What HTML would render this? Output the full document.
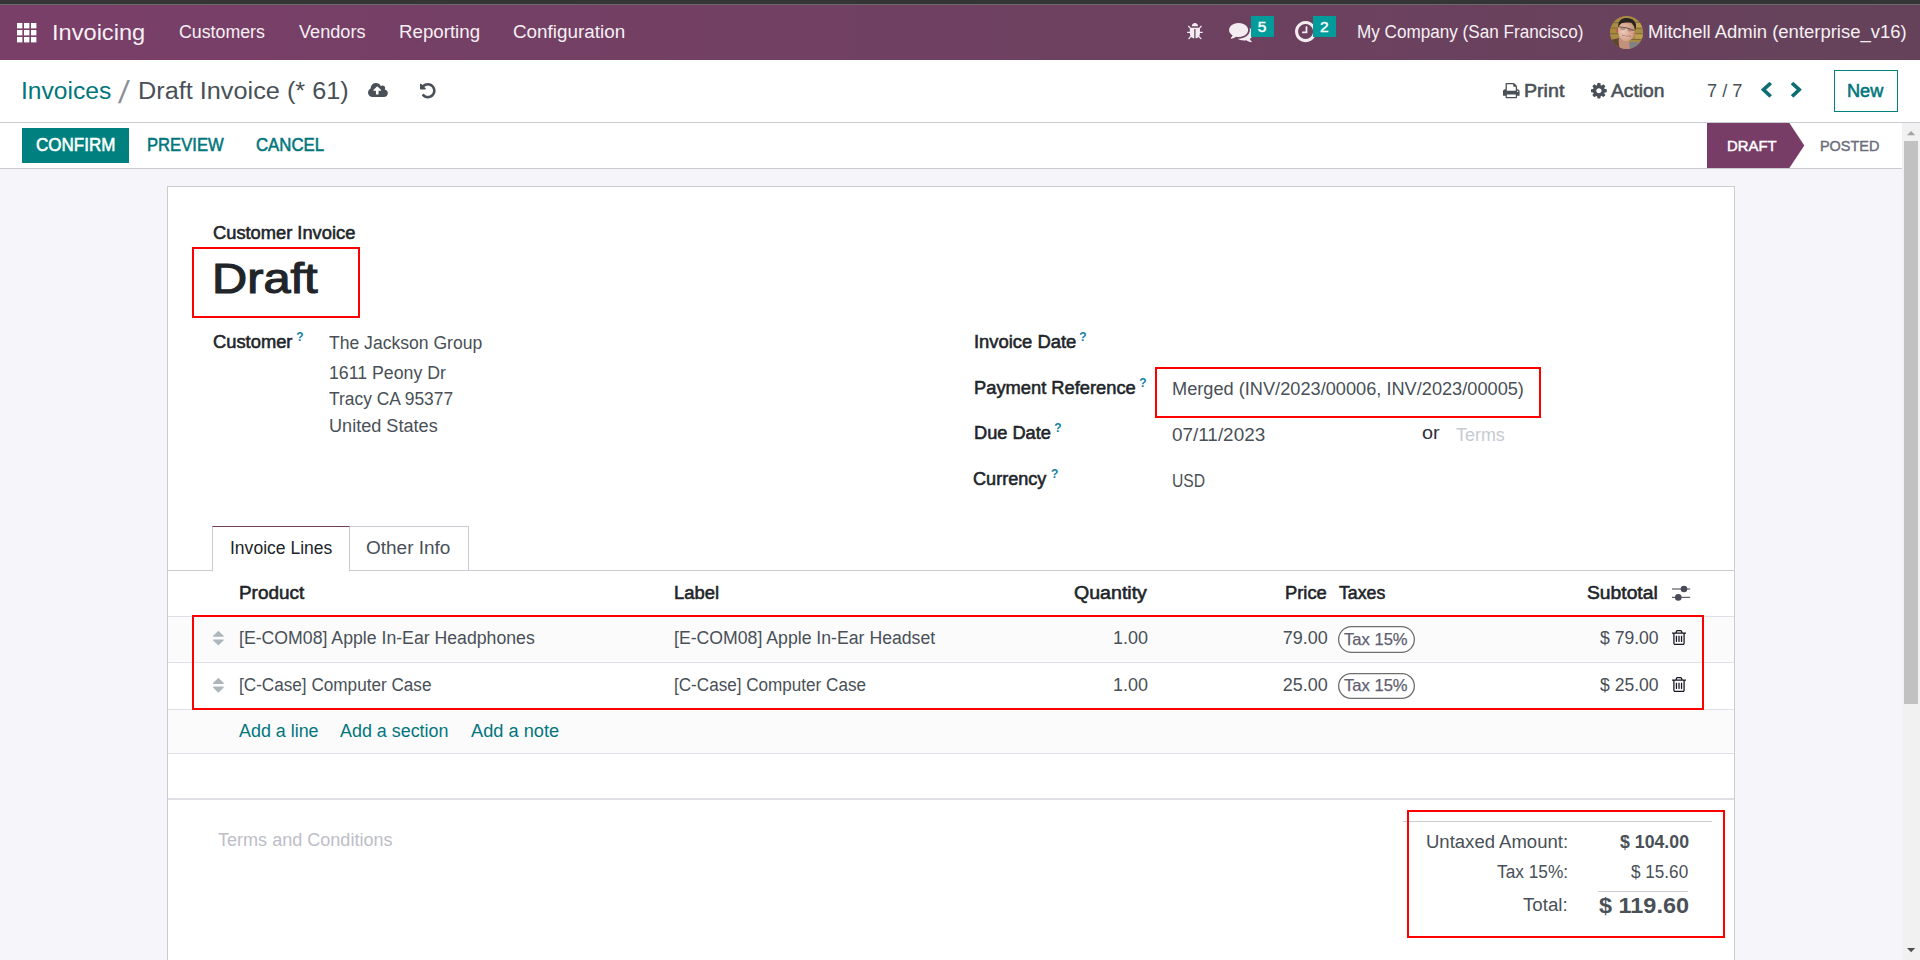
<!DOCTYPE html>
<html lang="en"><head><meta charset="utf-8"><title>Odoo - Draft Invoice</title>
<style>
html,body{margin:0;padding:0}
body{width:1920px;height:960px;overflow:hidden;position:relative;background:#fff;font-family:"Liberation Sans", sans-serif}
.bx{position:absolute;box-sizing:content-box}
.ic{position:absolute;display:block;overflow:visible}
.t{position:absolute;white-space:pre;line-height:1;font-family:"Liberation Sans", sans-serif;transform-origin:0 0}
</style></head>
<body>
<header id="navbar">
<div class="bx" style="left:0px;top:0px;width:1920.00px;height:4.00px;background:#353535"></div>
<div class="bx" style="left:0px;top:4px;width:1920.00px;height:1.00px;background:#696969"></div>
<div class="bx" style="left:0px;top:5px;width:1920.00px;height:55.00px;background:linear-gradient(90deg,#7A3F69 0%,#65425A 100%)"></div>
<svg class="ic" style="left:16.9px;top:23px;width:19.4px;height:19.4px" viewBox="0 0 19.4 19.4"><rect x="0" y="0" width="5.4" height="5.4" fill="#fff"/><rect x="7" y="0" width="5.4" height="5.4" fill="#fff"/><rect x="14" y="0" width="5.4" height="5.4" fill="#fff"/><rect x="0" y="7" width="5.4" height="5.4" fill="#fff"/><rect x="7" y="7" width="5.4" height="5.4" fill="#fff"/><rect x="14" y="7" width="5.4" height="5.4" fill="#fff"/><rect x="0" y="14" width="5.4" height="5.4" fill="#fff"/><rect x="7" y="14" width="5.4" height="5.4" fill="#fff"/><rect x="14" y="14" width="5.4" height="5.4" fill="#fff"/></svg>
<svg class="ic" style="left:1187.1px;top:22.9px;width:15.80px;height:16.30px" viewBox="32 -1472 1600 1568" preserveAspectRatio="none"><path fill="#F3ECF0" transform="scale(1,-1)" d="M1632 576q0 -26 -19 -45t-45 -19h-224q0 -171 -67 -290l208 -209q19 -19 19 -45t-19 -45q-18 -19 -45 -19t-45 19l-198 197q-5 -5 -15 -13t-42 -28.5t-65 -36.5t-82 -29t-97 -13v896h-128v-896q-51 0 -101.5 13.5t-87 33t-66 39t-43.5 32.5l-15 14l-183 -207
q-20 -21 -48 -21q-24 0 -43 16q-19 18 -20.5 44.5t15.5 46.5l202 227q-58 114 -58 274h-224q-26 0 -45 19t-19 45t19 45t45 19h224v294l-173 173q-19 19 -19 45t19 45t45 19t45 -19l173 -173h844l173 173q19 19 45 19t45 -19t19 -45t-19 -45l-173 -173v-294h224q26 0 45 -19
t19 -45zM1152 1152h-640q0 133 93.5 226.5t226.5 93.5t226.5 -93.5t93.5 -226.5z"/></svg>
<svg class="ic" style="left:1229.2px;top:22.9px;width:24.40px;height:19.20px" viewBox="0 -1279.9999694824219 1792 1408.111083984375" preserveAspectRatio="none"><path fill="#F3ECF0" transform="scale(1,-1)" d="M1408 768q0 -139 -94 -257t-256.5 -186.5t-353.5 -68.5q-86 0 -176 16q-124 -88 -278 -128q-36 -9 -86 -16h-3q-11 0 -20.5 8t-11.5 21q-1 3 -1 6.5t0.5 6.5t2 6l2.5 5t3.5 5.5t4 5t4.5 5t4 4.5q5 6 23 25t26 29.5t22.5 29t25 38.5t20.5 44q-124 72 -195 177t-71 224
q0 139 94 257t256.5 186.5t353.5 68.5t353.5 -68.5t256.5 -186.5t94 -257zM1792 512q0 -120 -71 -224.5t-195 -176.5q10 -24 20.5 -44t25 -38.5t22.5 -29t26 -29.5t23 -25q1 -1 4 -4.5t4.5 -5t4 -5t3.5 -5.5l2.5 -5t2 -6t0.5 -6.5t-1 -6.5q-3 -14 -13 -22t-22 -7
q-50 7 -86 16q-154 40 -278 128q-90 -16 -176 -16q-271 0 -472 132q58 -4 88 -4q161 0 309 45t264 129q125 92 192 212t67 254q0 77 -23 152q129 -71 204 -178t75 -230z"/></svg>
<div class="bx" style="left:1250.75px;top:16px;width:23.25px;height:20.75px;background:#029B9B"></div>
<svg class="ic" style="left:1294.6px;top:21.3px;width:21.20px;height:21.20px" viewBox="0 -1408 1536 1536" preserveAspectRatio="none"><path fill="#F3ECF0" transform="scale(1,-1)" d="M896 992v-448q0 -14 -9 -23t-23 -9h-320q-14 0 -23 9t-9 23v64q0 14 9 23t23 9h224v352q0 14 9 23t23 9h64q14 0 23 -9t9 -23zM1312 640q0 148 -73 273t-198 198t-273 73t-273 -73t-198 -198t-73 -273t73 -273t198 -198t273 -73t273 73t198 198t73 273zM1536 640
q0 -209 -103 -385.5t-279.5 -279.5t-385.5 -103t-385.5 103t-279.5 279.5t-103 385.5t103 385.5t279.5 279.5t385.5 103t385.5 -103t279.5 -279.5t103 -385.5z"/></svg>
<div class="bx" style="left:1313px;top:16px;width:22.75px;height:20.75px;background:#029B9B"></div>
<svg class="ic" style="left:1609.9px;top:16px;width:33.1px;height:33.1px" viewBox="0 0 33 33">
<defs><clipPath id="av"><circle cx="16.5" cy="16.5" r="16.5"/></clipPath>
<radialGradient id="avf" cx="0.32" cy="0.5" r="0.6"><stop offset="0" stop-color="#ECCBBB"/><stop offset="0.55" stop-color="#DDAE98"/><stop offset="1" stop-color="#CF9C85"/></radialGradient></defs>
<g clip-path="url(#av)"><g>
<rect x="-2" y="-2" width="37" height="37" fill="#A88C45"/>
<rect x="-2" y="6.2" width="37" height="1" fill="#7C6636"/>
<rect x="-2" y="11.6" width="37" height="1" fill="#7C6636"/>
<rect x="-2" y="17.2" width="37" height="1" fill="#7C6636"/>
<rect x="-2" y="22.8" width="37" height="1" fill="#7C6636"/>
<rect x="-2" y="28" width="37" height="1" fill="#7C6636"/>
<rect x="24" y="7" width="12" height="4.4" fill="#BC9F52"/>
<rect x="25" y="18.4" width="10" height="4.2" fill="#BA9D50"/>
<rect x="0" y="12.8" width="6" height="4.2" fill="#A9883A"/>
<path d="M2 24 L9 22 L13 33 L0 33Z" fill="#5B4632"/>
<path d="M17 27 L27 25.5 L31 34 L14 34Z" fill="#7E8187"/>
<path d="M9 20 L18 21 L20 33 L10 33 Q8 27 9 20Z" fill="#C4907A"/>
<ellipse cx="16.2" cy="15" rx="8.3" ry="10.2" transform="rotate(-7 16.2 15)" fill="url(#avf)"/>
<path d="M8.2 11.5 Q7.5 3.2 15 2 Q23.5 1 25.8 8 Q26.5 11 25.2 14.2 Q24.2 9.2 21.5 6.8 Q16 5.8 11.5 7.2 Q9 8.8 8.2 11.5Z" fill="#2A2220"/>
<path d="M8.6 10.8 L16 11.8 L24.6 14.4" stroke="#4A3C38" stroke-width="1" fill="none" opacity="0.8"/><ellipse cx="12.6" cy="12.6" rx="2.6" ry="1.5" fill="#8A6A5E" opacity="0.55"/><ellipse cx="20" cy="14" rx="2.6" ry="1.5" fill="#8A6A5E" opacity="0.55"/>
<ellipse cx="7.3" cy="14.6" rx="0.9" ry="2" fill="#B8574A"/>
<ellipse cx="24.6" cy="17.6" rx="0.9" ry="1.8" fill="#C47A62"/>
<path d="M12.2 19.2 Q16 22.6 20.6 20.4 Q16.4 20.6 12.2 19.2Z" fill="#F4ECE8"/>
<path d="M12 19 Q16.2 21 20.8 20.2" stroke="#8E4A42" stroke-width="0.6" fill="none"/>
</g></g></svg>
<span class="t" id="t0" style="left:51.69px;top:22.00px;color:#F6F0F4;font-size:22.3px;font-weight:400;transform:scaleX(1.0589);">Invoicing</span>
<span class="t" id="t1" style="left:179.10px;top:23.00px;color:#F6F0F4;font-size:18px;font-weight:400;transform:scaleX(0.9871);">Customers</span>
<span class="t" id="t2" style="left:298.87px;top:23.00px;color:#F6F0F4;font-size:18px;font-weight:400;transform:scaleX(1.0080);">Vendors</span>
<span class="t" id="t3" style="left:398.64px;top:23.00px;color:#F6F0F4;font-size:18px;font-weight:400;transform:scaleX(1.0382);">Reporting</span>
<span class="t" id="t4" style="left:512.84px;top:23.00px;color:#F6F0F4;font-size:18px;font-weight:400;transform:scaleX(1.0475);">Configuration</span>
<span class="t" id="t5" style="left:1257.86px;top:19.40px;color:#ffffff;font-size:15.5px;font-weight:400;-webkit-text-stroke:0.47px currentColor;">5</span>
<span class="t" id="t6" style="left:1319.97px;top:19.40px;color:#ffffff;font-size:15.5px;font-weight:400;-webkit-text-stroke:0.47px currentColor;">2</span>
<span class="t" id="t7" style="left:1357.17px;top:23.00px;color:#F6F0F4;font-size:18px;font-weight:400;transform:scaleX(0.9510);">My Company (San Francisco)</span>
<span class="t" id="t8" style="left:1648.20px;top:23.00px;color:#F6F0F4;font-size:18px;font-weight:400;transform:scaleX(1.0261);">Mitchell Admin (enterprise_v16)</span>
</header>
<section id="control-panel">
<div class="bx" style="left:0px;top:60px;width:1920.00px;height:62.00px;background:#fff"></div>
<div class="bx" style="left:0px;top:122px;width:1920.00px;height:1.00px;background:#C9CCD3"></div>
<svg class="ic" style="left:368px;top:82.8px;width:19.80px;height:14.00px" viewBox="0 -1408 1920 1408" preserveAspectRatio="none"><path fill="#495057" transform="scale(1,-1)" d="M1280 672q0 14 -9 23l-352 352q-9 9 -23 9t-23 -9l-351 -351q-10 -12 -10 -24q0 -14 9 -23t23 -9h224v-352q0 -13 9.5 -22.5t22.5 -9.5h192q13 0 22.5 9.5t9.5 22.5v352h224q13 0 22.5 9.5t9.5 22.5zM1920 384q0 -159 -112.5 -271.5t-271.5 -112.5h-1088
q-185 0 -316.5 131.5t-131.5 316.5q0 130 70 240t188 165q-2 30 -2 43q0 212 150 362t362 150q156 0 285.5 -87t188.5 -231q71 62 166 62q106 0 181 -75t75 -181q0 -76 -41 -138q130 -31 213.5 -135.5t83.5 -238.5z"/></svg>
<svg class="ic" style="left:420.1px;top:83px;width:15.60px;height:15.40px" viewBox="0 -1408 1536 1536" preserveAspectRatio="none"><path fill="#495057" transform="scale(1,-1)" d="M1536 640q0 -156 -61 -298t-164 -245t-245 -164t-298 -61q-172 0 -327 72.5t-264 204.5q-7 10 -6.5 22.5t8.5 20.5l137 138q10 9 25 9q16 -2 23 -12q73 -95 179 -147t225 -52q104 0 198.5 40.5t163.5 109.5t109.5 163.5t40.5 198.5t-40.5 198.5t-109.5 163.5
t-163.5 109.5t-198.5 40.5q-98 0 -188 -35.5t-160 -101.5l137 -138q31 -30 14 -69q-17 -40 -59 -40h-448q-26 0 -45 19t-19 45v448q0 42 40 59q39 17 69 -14l130 -129q107 101 244.5 156.5t284.5 55.5q156 0 298 -61t245 -164t164 -245t61 -298z"/></svg>
<svg class="ic" style="left:1503.1px;top:82.8px;width:16.60px;height:15.30px" viewBox="0 -1408 1664 1536" preserveAspectRatio="none"><path fill="#495057" transform="scale(1,-1)" d="M384 0h896v256h-896v-256zM384 640h896v384h-160q-40 0 -68 28t-28 68v160h-640v-640zM1536 576q0 26 -19 45t-45 19t-45 -19t-19 -45t19 -45t45 -19t45 19t19 45zM1664 576v-416q0 -13 -9.5 -22.5t-22.5 -9.5h-224v-160q0 -40 -28 -68t-68 -28h-960q-40 0 -68 28t-28 68
v160h-224q-13 0 -22.5 9.5t-9.5 22.5v416q0 79 56.5 135.5t135.5 56.5h64v544q0 40 28 68t68 28h672q40 0 88 -20t76 -48l152 -152q28 -28 48 -76t20 -88v-256h64q79 0 135.5 -56.5t56.5 -135.5z"/></svg>
<svg class="ic" style="left:1590.9px;top:82.8px;width:15.80px;height:15.40px" viewBox="0 -1408 1536 1536" preserveAspectRatio="none"><path fill="#495057" transform="scale(1,-1)" d="M1024 640q0 106 -75 181t-181 75t-181 -75t-75 -181t75 -181t181 -75t181 75t75 181zM1536 749v-222q0 -12 -8 -23t-20 -13l-185 -28q-19 -54 -39 -91q35 -50 107 -138q10 -12 10 -25t-9 -23q-27 -37 -99 -108t-94 -71q-12 0 -26 9l-138 108q-44 -23 -91 -38
q-16 -136 -29 -186q-7 -28 -36 -28h-222q-14 0 -24.5 8.5t-11.5 21.5l-28 184q-49 16 -90 37l-141 -107q-10 -9 -25 -9q-14 0 -25 11q-126 114 -165 168q-7 10 -7 23q0 12 8 23q15 21 51 66.5t54 70.5q-27 50 -41 99l-183 27q-13 2 -21 12.5t-8 23.5v222q0 12 8 23t19 13
l186 28q14 46 39 92q-40 57 -107 138q-10 12 -10 24q0 10 9 23q26 36 98.5 107.5t94.5 71.5q13 0 26 -10l138 -107q44 23 91 38q16 136 29 186q7 28 36 28h222q14 0 24.5 -8.5t11.5 -21.5l28 -184q49 -16 90 -37l142 107q9 9 24 9q13 0 25 -10q129 -119 165 -170q7 -8 7 -22
q0 -12 -8 -23q-15 -21 -51 -66.5t-54 -70.5q26 -50 41 -98l183 -28q13 -2 21 -12.5t8 -23.5z"/></svg>
<svg class="ic" style="left:1761.3px;top:82.2px;width:10.80px;height:15.40px" viewBox="154 -1510 1036 1612" preserveAspectRatio="none"><path fill="#0B6E73" transform="scale(1,-1)" d="M1171 1235l-531 -531l531 -531q19 -19 19 -45t-19 -45l-166 -166q-19 -19 -45 -19t-45 19l-742 742q-19 19 -19 45t19 45l742 742q19 19 45 19t45 -19l166 -166q19 -19 19 -45t-19 -45z"/></svg>
<svg class="ic" style="left:1791px;top:82.2px;width:10.70px;height:15.40px" viewBox="90 -1510 1036 1612" preserveAspectRatio="none"><path fill="#0B6E73" transform="scale(1,-1)" d="M1107 659l-742 -742q-19 -19 -45 -19t-45 19l-166 166q-19 19 -19 45t19 45l531 531l-531 531q-19 19 -19 45t19 45l166 166q19 19 45 19t45 -19l742 -742q19 -19 19 -45t-19 -45z"/></svg>
<div class="bx" style="left:1834px;top:70px;width:62px;height:40px;border:1px solid #008180"></div>
<span class="t" id="t9" style="left:21.46px;top:79.00px;color:#01767C;font-size:24.7px;font-weight:400;transform:scaleX(0.9969);">Invoices</span>
<span class="t" id="t10" style="left:119.30px;top:77.40px;color:#8D8E98;font-size:31.7px;font-weight:400;transform:skewX(-7.5deg);transform-origin:50% 60%;">/</span>
<span class="t" id="t11" style="left:137.74px;top:79.00px;color:#495057;font-size:24.7px;font-weight:400;transform:scaleX(1.0238);">Draft Invoice (* 61)</span>
<span class="t" id="t12" style="left:1524.04px;top:82.00px;color:#495057;font-size:18px;font-weight:400;-webkit-text-stroke:0.55px currentColor;transform:scaleX(1.0902);">Print</span>
<span class="t" id="t13" style="left:1611.37px;top:82.00px;color:#495057;font-size:18px;font-weight:400;-webkit-text-stroke:0.55px currentColor;transform:scaleX(1.0675);">Action</span>
<span class="t" id="t14" style="left:1706.90px;top:82.00px;color:#495057;font-size:18px;font-weight:400;transform:scaleX(1.0103);">7 / 7</span>
<span class="t" id="t15" style="left:1847.34px;top:82.00px;color:#01767C;font-size:18px;font-weight:400;-webkit-text-stroke:0.55px currentColor;transform:scaleX(1.0082);">New</span>
</section>
<section id="statusbar">
<div class="bx" style="left:0px;top:123px;width:1902.00px;height:45.00px;background:#fff"></div>
<div class="bx" style="left:0px;top:168px;width:1902.00px;height:1.00px;background:#C9CCD3"></div>
<div class="bx" style="left:22px;top:128px;width:107.00px;height:34.75px;background:#008180"></div>
<svg class="ic" style="left:1707px;top:123px;width:98px;height:45px" viewBox="0 0 98 45"><polygon points="0,0 82.4,0 97.3,22.5 82.4,45 0,45" fill="#783D66"/></svg>
<span class="t" id="t16" style="left:35.66px;top:136.25px;color:#ffffff;font-size:18px;font-weight:400;-webkit-text-stroke:0.55px currentColor;transform:scaleX(0.9459);">CONFIRM</span>
<span class="t" id="t17" style="left:147.34px;top:136.25px;color:#01767C;font-size:18px;font-weight:400;-webkit-text-stroke:0.55px currentColor;transform:scaleX(0.9237);">PREVIEW</span>
<span class="t" id="t18" style="left:255.91px;top:136.25px;color:#01767C;font-size:18px;font-weight:400;-webkit-text-stroke:0.55px currentColor;transform:scaleX(0.9326);">CANCEL</span>
<span class="t" id="t19" style="left:1727.44px;top:138.80px;color:#ffffff;font-size:14.7px;font-weight:400;-webkit-text-stroke:0.45px currentColor;transform:scaleX(1.0129);">DRAFT</span>
<span class="t" id="t20" style="left:1820.28px;top:138.80px;color:#6C6E7D;font-size:14.7px;font-weight:400;-webkit-text-stroke:0.45px currentColor;transform:scaleX(0.9820);">POSTED</span>
</section>
<aside id="scrollbar">
<div class="bx" style="left:1902px;top:123px;width:18.00px;height:837.00px;background:#F1F1F1"></div>
<div class="bx" style="left:1904px;top:141px;width:14.00px;height:562.75px;background:#C1C1C1"></div>
<svg class="ic" style="left:1906.9px;top:130.9px;width:8.2px;height:4.3px" viewBox="0 0 9 5" preserveAspectRatio="none"><polygon points="0,5 4.5,0 9,5" fill="#A3A3A3"/></svg>
<svg class="ic" style="left:1906.9px;top:947.8px;width:8.2px;height:4.3px" viewBox="0 0 9 5" preserveAspectRatio="none"><polygon points="0,0 4.5,5 9,0" fill="#505050"/></svg>
</aside>
<main id="form-sheet">
<div class="bx" style="left:0px;top:169px;width:1902.00px;height:791.00px;background:#F5F5FA"></div>
<div class="bx" style="left:167px;top:186px;width:1566px;height:780px;background:#fff;border:1px solid #C9CCD3;"></div>
<div class="bx" style="left:168px;top:570px;width:1566.00px;height:1.00px;background:#C9CCD3"></div>
<div class="bx" style="left:349px;top:526px;width:118px;height:44px;border:1px solid #C9CCD3;border-bottom:none"></div>
<div class="bx" style="left:212px;top:526px;width:136px;height:44px;background:#fff;border:1px solid #C9CCD3;border-top-color:#71405F;border-bottom:1px solid #fff"></div>
<div class="bx" style="left:168px;top:616px;width:1566.00px;height:1.00px;background:#DEE0E6"></div>
<div class="bx" style="left:168px;top:617px;width:1566.00px;height:45.00px;background:#FBFBFC"></div>
<div class="bx" style="left:168px;top:662px;width:1566.00px;height:1.00px;background:#DEE0E6"></div>
<div class="bx" style="left:168px;top:709px;width:1566.00px;height:1.00px;background:#DEE0E6"></div>
<div class="bx" style="left:168px;top:710px;width:1566.00px;height:43.00px;background:#FBFBFC"></div>
<div class="bx" style="left:168px;top:753px;width:1566.00px;height:1.00px;background:#DEE0E6"></div>
<div class="bx" style="left:168px;top:798px;width:1566.00px;height:2.00px;background:#DEE0E6"></div>
<svg class="ic" style="left:213px;top:630.75px;width:10.75px;height:14.25px" viewBox="0 -1344 1024 1408" preserveAspectRatio="none"><path fill="#ADB5BD" transform="scale(1,-1)" d="M1024 448q0 -26 -19 -45l-448 -448q-19 -19 -45 -19t-45 19l-448 448q-19 19 -19 45t19 45t45 19h896q26 0 45 -19t19 -45zM1024 832q0 -26 -19 -45t-45 -19h-896q-26 0 -45 19t-19 45t19 45l448 448q19 19 45 19t45 -19l448 -448q19 -19 19 -45z"/></svg>
<svg class="ic" style="left:213px;top:677.5px;width:10.75px;height:14.50px" viewBox="0 -1344 1024 1408" preserveAspectRatio="none"><path fill="#ADB5BD" transform="scale(1,-1)" d="M1024 448q0 -26 -19 -45l-448 -448q-19 -19 -45 -19t-45 19l-448 448q-19 19 -19 45t19 45t45 19h896q26 0 45 -19t19 -45zM1024 832q0 -26 -19 -45t-45 -19h-896q-26 0 -45 19t-19 45t19 45l448 448q19 19 45 19t45 -19l448 -448q19 -19 19 -45z"/></svg>
<svg class="ic" style="left:1672.4px;top:630px;width:14.00px;height:15.00px" viewBox="0 -1408 1408 1536" preserveAspectRatio="none"><path fill="#171824" transform="scale(1,-1)" d="M512 800v-576q0 -14 -9 -23t-23 -9h-64q-14 0 -23 9t-9 23v576q0 14 9 23t23 9h64q14 0 23 -9t9 -23zM768 800v-576q0 -14 -9 -23t-23 -9h-64q-14 0 -23 9t-9 23v576q0 14 9 23t23 9h64q14 0 23 -9t9 -23zM1024 800v-576q0 -14 -9 -23t-23 -9h-64q-14 0 -23 9t-9 23v576
q0 14 9 23t23 9h64q14 0 23 -9t9 -23zM1152 76v948h-896v-948q0 -22 7 -40.5t14.5 -27t10.5 -8.5h832q3 0 10.5 8.5t14.5 27t7 40.5zM480 1152h448l-48 117q-7 9 -17 11h-317q-10 -2 -17 -11zM1408 1120v-64q0 -14 -9 -23t-23 -9h-96v-948q0 -83 -47 -143.5t-113 -60.5h-832
q-66 0 -113 58.5t-47 141.5v952h-96q-14 0 -23 9t-9 23v64q0 14 9 23t23 9h309l70 167q15 37 54 63t79 26h320q40 0 79 -26t54 -63l70 -167h309q14 0 23 -9t9 -23z"/></svg>
<svg class="ic" style="left:1672.4px;top:677px;width:14.00px;height:15.00px" viewBox="0 -1408 1408 1536" preserveAspectRatio="none"><path fill="#171824" transform="scale(1,-1)" d="M512 800v-576q0 -14 -9 -23t-23 -9h-64q-14 0 -23 9t-9 23v576q0 14 9 23t23 9h64q14 0 23 -9t9 -23zM768 800v-576q0 -14 -9 -23t-23 -9h-64q-14 0 -23 9t-9 23v576q0 14 9 23t23 9h64q14 0 23 -9t9 -23zM1024 800v-576q0 -14 -9 -23t-23 -9h-64q-14 0 -23 9t-9 23v576
q0 14 9 23t23 9h64q14 0 23 -9t9 -23zM1152 76v948h-896v-948q0 -22 7 -40.5t14.5 -27t10.5 -8.5h832q3 0 10.5 8.5t14.5 27t7 40.5zM480 1152h448l-48 117q-7 9 -17 11h-317q-10 -2 -17 -11zM1408 1120v-64q0 -14 -9 -23t-23 -9h-96v-948q0 -83 -47 -143.5t-113 -60.5h-832
q-66 0 -113 58.5t-47 141.5v952h-96q-14 0 -23 9t-9 23v64q0 14 9 23t23 9h309l70 167q15 37 54 63t79 26h320q40 0 79 -26t54 -63l70 -167h309q14 0 23 -9t9 -23z"/></svg>
<svg class="ic" style="left:1338px;top:626px;width:77px;height:27px" viewBox="0 0 77 27"><rect x="0.65" y="0.65" width="75.7" height="25.7" rx="12.85" fill="#fff" stroke="#6e6e6e" stroke-width="1.3"/></svg>
<svg class="ic" style="left:1338px;top:673px;width:77px;height:26px" viewBox="0 0 77 26"><rect x="0.65" y="0.65" width="75.7" height="24.7" rx="12.35" fill="#fff" stroke="#6e6e6e" stroke-width="1.3"/></svg>
<svg class="ic" style="left:1672px;top:585.5px;width:18.2px;height:15px" viewBox="0 0 18.2 15">
<rect x="0" y="2.4" width="18.2" height="1.2" fill="#5d5e6b"/><circle cx="12" cy="3" r="3.3" fill="#4A4B59"/>
<rect x="0" y="10.8" width="18.2" height="1.2" fill="#5d5e6b"/><circle cx="6.3" cy="11.4" r="3.3" fill="#4A4B59"/></svg>
<div class="bx" style="left:1402.5px;top:821px;width:309.50px;height:1.00px;background:#C9CCD3"></div>
<div class="bx" style="left:1598px;top:891px;width:90.00px;height:1.00px;background:#C9CCD3"></div>
<div class="bx" style="left:192px;top:247px;width:164.00px;height:67.00px;border:2px solid #ff0000"></div>
<div class="bx" style="left:1155px;top:367px;width:382.00px;height:47.00px;border:2px solid #ff0000"></div>
<div class="bx" style="left:192px;top:615px;width:1508.00px;height:91.00px;border:2px solid #ff0000"></div>
<div class="bx" style="left:1407px;top:810px;width:314.00px;height:124.00px;border:2px solid #ff0000"></div>
<span class="t" id="t21" style="left:213.16px;top:224.25px;color:#212529;font-size:18px;font-weight:400;-webkit-text-stroke:0.55px currentColor;transform:scaleX(1.0162);">Customer Invoice</span>
<span class="t" id="t22" style="left:212.00px;top:257.00px;color:#212529;font-size:43px;font-weight:400;transform:scaleX(1.1329);-webkit-text-stroke:1.2px currentColor;">Draft</span>
<span class="t" id="t23" style="left:213.16px;top:333.25px;color:#212529;font-size:18px;font-weight:400;-webkit-text-stroke:0.55px currentColor;transform:scaleX(1.0186);">Customer</span>
<span class="t" id="t24" style="left:296.25px;top:331.25px;color:#1480A5;font-size:12px;font-weight:700;">?</span>
<span class="t" id="t25" style="left:329.06px;top:333.75px;color:#495057;font-size:18px;font-weight:400;transform:scaleX(0.9751);">The Jackson Group</span>
<span class="t" id="t26" style="left:329.11px;top:363.75px;color:#495057;font-size:18px;font-weight:400;transform:scaleX(0.9841);">1611 Peony Dr</span>
<span class="t" id="t27" style="left:329.07px;top:390.00px;color:#495057;font-size:18px;font-weight:400;transform:scaleX(0.9668);">Tracy CA 95377</span>
<span class="t" id="t28" style="left:329.25px;top:416.75px;color:#495057;font-size:18px;font-weight:400;transform:scaleX(1.0059);">United States</span>
<span class="t" id="t29" style="left:973.60px;top:333.25px;color:#212529;font-size:18px;font-weight:400;-webkit-text-stroke:0.55px currentColor;transform:scaleX(1.0224);">Invoice Date</span>
<span class="t" id="t30" style="left:1079.15px;top:331.25px;color:#1480A5;font-size:12px;font-weight:700;">?</span>
<span class="t" id="t31" style="left:973.73px;top:379.25px;color:#212529;font-size:18px;font-weight:400;-webkit-text-stroke:0.55px currentColor;transform:scaleX(1.0170);">Payment Reference</span>
<span class="t" id="t32" style="left:1139.25px;top:377.25px;color:#1480A5;font-size:12px;font-weight:700;">?</span>
<span class="t" id="t33" style="left:1171.78px;top:380.00px;color:#495057;font-size:18px;font-weight:400;transform:scaleX(1.0106);">Merged (INV/2023/00006, INV/2023/00005)</span>
<span class="t" id="t34" style="left:973.73px;top:424.25px;color:#212529;font-size:18px;font-weight:400;-webkit-text-stroke:0.55px currentColor;transform:scaleX(1.0118);">Due Date</span>
<span class="t" id="t35" style="left:1054.25px;top:422.25px;color:#1480A5;font-size:12px;font-weight:700;">?</span>
<span class="t" id="t36" style="left:1171.95px;top:425.75px;color:#495057;font-size:18px;font-weight:400;transform:scaleX(1.0496);">07/11/2023</span>
<span class="t" id="t37" style="left:1421.66px;top:423.75px;color:#2E303C;font-size:18px;font-weight:400;transform:scaleX(1.1020);">or</span>
<span class="t" id="t38" style="left:1456.30px;top:426.25px;color:#C6CAD2;font-size:18px;font-weight:400;transform:scaleX(0.9955);">Terms</span>
<span class="t" id="t39" style="left:973.37px;top:470.00px;color:#212529;font-size:18px;font-weight:400;-webkit-text-stroke:0.55px currentColor;transform:scaleX(1.0051);">Currency</span>
<span class="t" id="t40" style="left:1051.00px;top:468.00px;color:#1480A5;font-size:12px;font-weight:700;">?</span>
<span class="t" id="t41" style="left:1171.65px;top:471.75px;color:#495057;font-size:18px;font-weight:400;transform:scaleX(0.8711);">USD</span>
<span class="t" id="t42" style="left:229.98px;top:538.75px;color:#212529;font-size:18px;font-weight:400;transform:scaleX(0.9742);">Invoice Lines</span>
<span class="t" id="t43" style="left:366.36px;top:538.75px;color:#495057;font-size:18px;font-weight:400;transform:scaleX(1.0543);">Other Info</span>
<span class="t" id="t44" style="left:238.89px;top:584.00px;color:#212529;font-size:18px;font-weight:400;-webkit-text-stroke:0.55px currentColor;transform:scaleX(1.0500);">Product</span>
<span class="t" id="t45" style="left:673.72px;top:584.00px;color:#212529;font-size:18px;font-weight:400;-webkit-text-stroke:0.55px currentColor;transform:scaleX(1.0236);">Label</span>
<span class="t" id="t46" style="left:1073.85px;top:584.00px;color:#212529;font-size:18px;font-weight:400;-webkit-text-stroke:0.55px currentColor;transform:scaleX(1.0876);">Quantity</span>
<span class="t" id="t47" style="left:1284.98px;top:584.00px;color:#212529;font-size:18px;font-weight:400;-webkit-text-stroke:0.55px currentColor;transform:scaleX(1.0173);">Price</span>
<span class="t" id="t48" style="left:1338.53px;top:584.00px;color:#212529;font-size:18px;font-weight:400;-webkit-text-stroke:0.55px currentColor;transform:scaleX(0.9852);">Taxes</span>
<span class="t" id="t49" style="left:1587.03px;top:584.00px;color:#212529;font-size:18px;font-weight:400;-webkit-text-stroke:0.55px currentColor;transform:scaleX(1.0706);">Subtotal</span>
<span class="t" id="t50" style="left:238.98px;top:629.00px;color:#495057;font-size:18px;font-weight:400;transform:scaleX(0.9821);">[E-COM08] Apple In-Ear Headphones</span>
<span class="t" id="t51" style="left:673.68px;top:629.00px;color:#495057;font-size:18px;font-weight:400;transform:scaleX(0.9814);">[E-COM08] Apple In-Ear Headset</span>
<span class="t" id="t52" style="left:1113.08px;top:629.00px;color:#495057;font-size:18px;font-weight:400;">1.00</span>
<span class="t" id="t53" style="left:1282.66px;top:629.00px;color:#495057;font-size:18px;font-weight:400;">79.00</span>
<span class="t" id="t54" style="left:1344.11px;top:630.80px;color:#5F6070;font-size:16.5px;font-weight:400;transform:scaleX(1.0049);-webkit-text-stroke:0.25px currentColor;">Tax 15%</span>
<span class="t" id="t55" style="left:1599.53px;top:629.00px;color:#495057;font-size:18px;font-weight:400;transform:scaleX(0.9760);">$ 79.00</span>
<span class="t" id="t56" style="left:239.02px;top:676.25px;color:#495057;font-size:18px;font-weight:400;transform:scaleX(0.9524);">[C-Case] Computer Case</span>
<span class="t" id="t57" style="left:673.72px;top:676.25px;color:#495057;font-size:18px;font-weight:400;transform:scaleX(0.9501);">[C-Case] Computer Case</span>
<span class="t" id="t58" style="left:1113.08px;top:676.25px;color:#495057;font-size:18px;font-weight:400;">1.00</span>
<span class="t" id="t59" style="left:1282.66px;top:676.25px;color:#495057;font-size:18px;font-weight:400;">25.00</span>
<span class="t" id="t60" style="left:1344.11px;top:676.80px;color:#5F6070;font-size:16.5px;font-weight:400;transform:scaleX(1.0049);-webkit-text-stroke:0.25px currentColor;">Tax 15%</span>
<span class="t" id="t61" style="left:1599.53px;top:676.25px;color:#495057;font-size:18px;font-weight:400;transform:scaleX(0.9760);">$ 25.00</span>
<span class="t" id="t62" style="left:238.68px;top:722.00px;color:#01767C;font-size:18px;font-weight:400;transform:scaleX(0.9936);">Add a line</span>
<span class="t" id="t63" style="left:340.18px;top:722.00px;color:#01767C;font-size:18px;font-weight:400;transform:scaleX(0.9942);">Add a section</span>
<span class="t" id="t64" style="left:470.93px;top:722.00px;color:#01767C;font-size:18px;font-weight:400;transform:scaleX(1.0116);">Add a note</span>
<span class="t" id="t65" style="left:218.15px;top:830.75px;color:#BDBEC8;font-size:18px;font-weight:400;transform:scaleX(1.0025);">Terms and Conditions</span>
<span class="t" id="t66" style="left:1425.92px;top:833.30px;color:#495057;font-size:18px;font-weight:400;transform:scaleX(1.0288);">Untaxed Amount:</span>
<span class="t" id="t67" style="left:1619.70px;top:833.30px;color:#495057;font-size:18px;font-weight:700;transform:scaleX(0.9847);">$ 104.00</span>
<span class="t" id="t68" style="left:1496.77px;top:863.40px;color:#495057;font-size:18px;font-weight:400;transform:scaleX(0.9597);">Tax 15%:</span>
<span class="t" id="t69" style="left:1630.64px;top:863.40px;color:#495057;font-size:18px;font-weight:400;transform:scaleX(0.9522);">$ 15.60</span>
<span class="t" id="t70" style="left:1523.24px;top:895.80px;color:#495057;font-size:18px;font-weight:400;transform:scaleX(1.0389);">Total:</span>
<span class="t" id="t71" style="left:1598.85px;top:894.50px;color:#495057;font-size:22.6px;font-weight:700;transform:scaleX(1.0383);">$ 119.60</span>
</main>
</body></html>
